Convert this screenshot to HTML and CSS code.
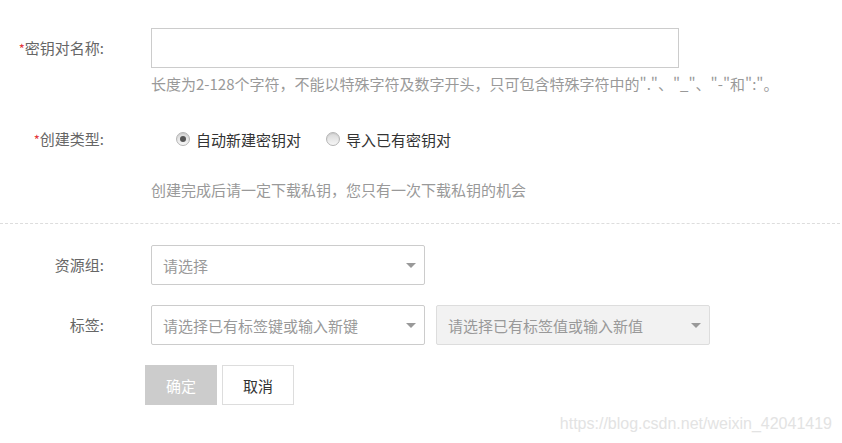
FILE: index.html
```html
<!DOCTYPE html>
<html lang="zh-CN">
<head>
<meta charset="utf-8">
<title>创建密钥对</title>
<link rel="stylesheet" href="styles.css">
</head>
<body>
<div class="form">
  <div class="row row-name">
    <div class="label"><span class="req">*</span>密钥对名称:</div>
    <div class="control">
      <div class="text-input"></div>
      <div class="hint hint-name">长度为2-128个字符，不能以特殊字符及数字开头，只可包含特殊字符中的"."、"_"、"-"和":"。</div>
    </div>
  </div>

  <div class="row row-type">
    <div class="label"><span class="req">*</span>创建类型:</div>
    <div class="control">
      <div class="radios">
        <label class="radio"><span class="dot checked"></span><span class="radio-text">自动新建密钥对</span></label>
        <label class="radio"><span class="dot"></span><span class="radio-text">导入已有密钥对</span></label>
      </div>
      <div class="hint hint-type">创建完成后请一定下载私钥，您只有一次下载私钥的机会</div>
    </div>
  </div>

  <div class="divider"></div>

  <div class="row row-group">
    <div class="label">资源组:</div>
    <div class="control">
      <div class="select"><span class="placeholder">请选择</span><span class="caret"></span></div>
    </div>
  </div>

  <div class="row row-tag">
    <div class="label">标签:</div>
    <div class="control control-tags">
      <div class="select"><span class="placeholder">请选择已有标签键或输入新键</span><span class="caret"></span></div>
      <div class="select disabled"><span class="placeholder">请选择已有标签值或输入新值</span><span class="caret"></span></div>
    </div>
  </div>

  <div class="actions">
    <button class="btn btn-ok">确定</button>
    <button class="btn btn-cancel">取消</button>
  </div>
</div>
<div class="watermark">https://blog.csdn.net/weixin_42041419</div>
</body>
</html>
```

FILE: styles.css
```css
html, body {
  margin: 0;
  padding: 0;
  background: #fff;
}
body {
  width: 842px;
  height: 443px;
  overflow: hidden;
  position: relative;
  font-family: "Noto Sans CJK SC", "Noto Sans", sans-serif;
  font-size: 15px;
  color: #333;
}
.form {
  padding-top: 28px;
}
.row {
  display: flex;
  align-items: flex-start;
}
.label {
  width: 104px;
  flex: none;
  text-align: right;
  line-height: 40px;
  height: 40px;
  color: #666;
  font-size: 15px;
  white-space: nowrap;
}
.req {
  color: #e4393c;
  font-size: 13px;
}
.control {
  margin-left: 47px;
}
.text-input {
  width: 526px;
  height: 38px;
  border: 1px solid #ccc;
  background: #fff;
}
.hint {
  color: #999;
  font-size: 15px;
  line-height: 20px;
  white-space: nowrap;
}
.hint-name {
  margin-top: 6px;
}
.row-type {
  margin-top: 25px;
}
.radios {
  display: flex;
  height: 40px;
  align-items: center;
  padding-left: 25px;
  gap: 25px;
}
.radio {
  display: flex;
  align-items: center;
  color: #333;
  font-size: 15px;
}
.dot {
  width: 12px;
  height: 12px;
  border-radius: 50%;
  border: 1px solid #b5b5b5;
  background: linear-gradient(#d8d8d8, #f6f6f6);
  margin-right: 6px;
  position: relative;
  box-shadow: inset 0 1px 1px rgba(0,0,0,0.08);
}
.dot.checked::after {
  content: "";
  position: absolute;
  left: 3px;
  top: 3px;
  width: 6px;
  height: 6px;
  border-radius: 50%;
  background: #555;
}
.hint-type {
  margin-top: 21px;
}
.divider {
  margin-top: 23px;
  border-top: 1px dashed #ddd;
  width: 840px;
}
.row-group {
  margin-top: 21px;
}
.row-tag {
  margin-top: 20px;
}
.control-tags {
  display: flex;
  gap: 11px;
}
.select {
  height: 38px;
  border: 1px solid #ccc;
  border-radius: 2px;
  background: #fff;
  display: flex;
  align-items: center;
  justify-content: space-between;
  padding: 0 8px 0 11px;
  box-sizing: content-box;
  width: 253px;
}
.select.disabled {
  background: #f2f2f2;
  border-color: #ddd;
}
.placeholder {
  color: #999;
  font-size: 15px;
  white-space: nowrap;
}
.caret {
  width: 0;
  height: 0;
  border-left: 5px solid transparent;
  border-right: 5px solid transparent;
  border-top: 5px solid #999;
}
.actions {
  display: flex;
  gap: 5px;
  margin-top: 20px;
  margin-left: 145px;
}
.btn {
  height: 40px;
  width: 72px;
  font-family: inherit;
  font-size: 15px;
  padding: 0;
  border-radius: 0;
  cursor: pointer;
}
.btn-ok {
  background: #ccc;
  border: 1px solid #ccc;
  color: #fff;
}
.btn-cancel {
  background: #fff;
  border: 1px solid #ddd;
  color: #333;
}
.watermark {
  position: absolute;
  right: 10px;
  top: 414px;
  font-family: "Liberation Sans", Arial, sans-serif;
  font-size: 16px;
  line-height: 20px;
  color: #e3e3e3;
  white-space: nowrap;
}
```
